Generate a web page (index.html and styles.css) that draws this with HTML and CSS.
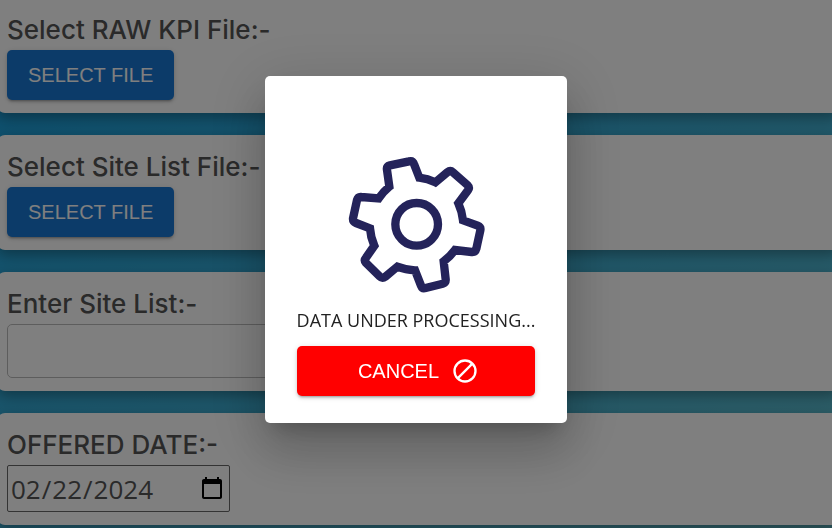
FILE: index.html
```html
<!DOCTYPE html>
<html lang="en">
<head>
<meta charset="utf-8">
<title>KPI Upload</title>
<link rel="stylesheet" href="styles.css">
</head>
<body>
<main class="form-list">
  <section class="card">
    <h2 class="card-title">Select RAW KPI File:-</h2>
    <button class="btn btn-primary" type="button">SELECT FILE</button>
  </section>
  <section class="card">
    <h2 class="card-title">Select Site List File:-</h2>
    <button class="btn btn-primary" type="button">SELECT FILE</button>
  </section>
  <section class="card">
    <label class="card-title" for="site-list">Enter Site List:-</label>
    <input class="text-field" id="site-list" type="text">
  </section>
  <section class="card">
    <label class="card-title" for="offered-date">OFFERED DATE:-</label>
    <input class="date-field" id="offered-date" type="date" value="2024-02-22">
  </section>
</main>
<div class="backdrop">
  <div class="dialog" role="dialog" aria-modal="true" aria-labelledby="status">
    <svg class="gear" viewBox="3 0 480 480" fill="none" stroke="#24235a" stroke-width="25" aria-hidden="true">
      <path d="M163 125L156 75Q154 64 165 61L222 49Q233 46 237 57L253 98Q278 101 301 112L337 82Q346 75 354 82L397 120Q405 128 399 136L370 175Q381 199 384 226L428 242Q438 246 436 256L424 311Q421 322 410 321L360 315Q346 334 326 349L332 403Q333 413 323 416L272 429Q262 432 258 422L240 376Q212 375 187 365L151 395Q142 402 134 394L93 354Q86 346 93 338L118 302Q107 277 105 250L63 234Q53 230 54 220L66 165Q69 155 79 156L131 160Q145 140 163 125Z"/>
      <circle cx="245" cy="238" r="64"/>
    </svg>
    <p class="status" id="status">DATA UNDER PROCESSING...</p>
    <button class="btn btn-cancel" type="button">CANCEL
      <svg class="btn-icon" viewBox="0 0 24 24" fill="none" stroke="currentColor" stroke-width="2" aria-hidden="true"><circle cx="12" cy="12" r="9"/><path d="M5.7 18.3L18.3 5.7"/></svg>
    </button>
  </div>
</div>
</body>
</html>
```
FILE: styles.css
```css
* { box-sizing: border-box; }

body {
  margin: 0;
  min-height: 100vh;
  overflow: hidden;
  background: linear-gradient(150deg, #149ee0 0%, #62c0ce 100%);
  font-family: "Open Sans", "Noto Sans", sans-serif;
}

.form-list {
  display: flex;
  flex-direction: column;
  gap: 22px;
  margin: -2px -8px 0 -3px;
}

.card {
  display: flex;
  flex-direction: column;
  align-items: flex-start;
  padding: 12px 10px 13px;
  border-radius: 8px;
  background: #fff;
  box-shadow: 0 5px 15px rgba(0, 0, 0, 0.35);
}

.card-title {
  margin: 0;
  color: #555;
  font-family: Inter, "Liberation Sans", sans-serif;
  font-size: 26px;
  font-weight: 500;
  line-height: 40px;
}

.btn {
  display: flex;
  align-items: center;
  justify-content: center;
  height: 50px;
  padding: 0 21px;
  border: 0;
  border-radius: 5px;
  color: #fff;
  font-family: "Liberation Sans", Arial, sans-serif;
  font-size: 20px;
  box-shadow: 0 3px 2px -2px rgba(0, 0, 0, 0.2), 0 2px 3px rgba(0, 0, 0, 0.14), 0 1px 6px rgba(0, 0, 0, 0.12);
}

.btn-primary { background: #1976d2; }

.text-field {
  width: 100%;
  max-width: 400px;
  height: 54px;
  padding: 0 16px;
  border: 1px solid #bbb;
  border-radius: 5px;
  background: transparent;
  font-size: 20px;
}

.date-field {
  width: 223px;
  height: 47px;
  padding: 0 2px;
  border: 1px solid #666;
  border-radius: 2px;
  background: transparent;
  color: #555;
  font-family: "Open Sans", "Noto Sans", sans-serif;
  font-size: 26px;
  font-weight: 500;
}

.backdrop {
  position: fixed;
  inset: 0;
  display: flex;
  align-items: center;
  justify-content: center;
  padding-bottom: 29px;
  background: rgba(0, 0, 0, 0.5);
}

.dialog {
  display: flex;
  flex-direction: column;
  align-items: center;
  width: 302px;
  padding: 69px 32px 27px;
  border-radius: 5px;
  background: #fff;
  box-shadow: 0 14px 19px -9px rgba(0, 0, 0, 0.2), 0 30px 48px 4px rgba(0, 0, 0, 0.14), 0 11px 58px 10px rgba(0, 0, 0, 0.12);
}

.gear {
  width: 160px;
  height: 160px;
}

.status {
  margin: 0 0 11px;
  color: #222;
  font-size: 18px;
  line-height: 30px;
  white-space: nowrap;
}

.btn-cancel {
  width: 100%;
  padding-left: 26px;
  gap: 12px;
  background: red;
}

.btn-icon {
  width: 28px;
  height: 28px;
}
```
